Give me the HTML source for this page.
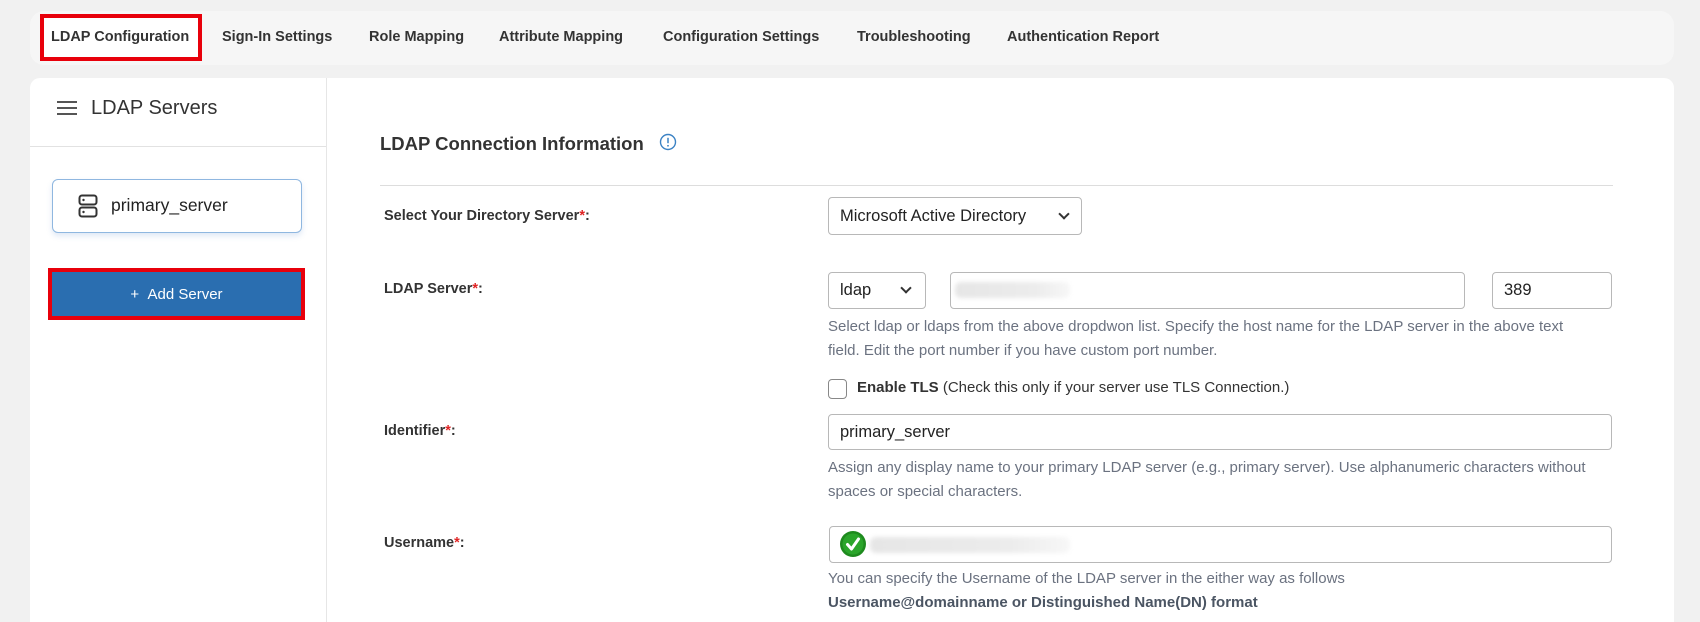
<!DOCTYPE html>
<html><head><meta charset="utf-8"><style>
*{box-sizing:border-box;margin:0;padding:0}
html,body{width:1700px;height:622px;overflow:hidden}
body{background:#f1f1f1;font-family:"Liberation Sans",sans-serif;color:#222;position:relative}
.abs{position:absolute}
.tabbar{left:30px;top:11px;width:1644px;height:54px;background:#f6f6f6;border-radius:14px}
.tab{position:absolute;top:29px;font-size:14.5px;font-weight:bold;color:#333;white-space:nowrap}
.card{left:30px;top:78px;width:1644px;height:544px;background:#fff;border-radius:10px 10px 0 0}
.lbl{position:absolute;left:384px;font-size:14.5px;font-weight:bold;color:#333}
.lbl i{color:#e02424;font-style:normal}
.box{position:absolute;border:1px solid #b8b8b8;border-radius:4px;background:#fff;font-size:16.5px;color:#222;padding-left:11px;display:flex;align-items:center}
.help{position:absolute;left:828px;font-size:15px;color:#6b7280;line-height:24px;white-space:nowrap}
.chev{position:absolute;width:8px;height:8px;border-right:2px solid #333;border-bottom:2px solid #333;transform:rotate(45deg)}
.blur{position:absolute;height:16px;background:linear-gradient(90deg,#e6e6e6,#ececec 70%,#f7f7f7);border-radius:6px;filter:blur(2px)}
</style></head><body>
<div class="abs tabbar"></div>
<div class="abs" style="left:40px;top:14px;width:162px;height:47px;border:4px solid #e8000b;background:#fff"></div>
<div class="tab" style="left:51px">LDAP Configuration</div>
<div class="tab" style="left:222px">Sign-In Settings</div>
<div class="tab" style="left:369px">Role Mapping</div>
<div class="tab" style="left:499px">Attribute Mapping</div>
<div class="tab" style="left:663px">Configuration Settings</div>
<div class="tab" style="left:857px">Troubleshooting</div>
<div class="tab" style="left:1007px">Authentication Report</div>

<div class="abs card"></div>
<div class="abs" style="left:326px;top:78px;width:1px;height:544px;background:#e6e6e6"></div>
<div class="abs" style="left:30px;top:146px;width:296px;height:1px;background:#e2e2e2"></div>
<div class="abs" style="left:57px;top:101px;width:20px;height:2px;background:#555;box-shadow:0 6px 0 #555,0 12px 0 #555"></div>
<div class="abs" style="left:91px;top:97px;font-size:20px;color:#333">LDAP Servers</div>

<div class="abs" style="left:52px;top:179px;width:250px;height:54px;border:1px solid #8fb7e0;border-radius:6px;box-shadow:0 3px 6px rgba(80,130,200,.18);background:#fff"></div>
<svg class="abs" style="left:78px;top:194px" width="20" height="24" viewBox="0 0 20 24"><rect x="1.5" y="1.5" width="17" height="9" rx="2.5" fill="none" stroke="#333" stroke-width="2"/><rect x="1.5" y="13.5" width="17" height="9" rx="2.5" fill="none" stroke="#333" stroke-width="2"/><circle cx="5.5" cy="6" r="1.2" fill="#333"/><circle cx="5.5" cy="18" r="1.2" fill="#333"/></svg>
<div class="abs" style="left:111px;top:195px;font-size:17.5px;color:#222">primary_server</div>

<div class="abs" style="left:48px;top:268px;width:257px;height:52px;border:4px solid #e8000b;background:#2a6eb0;color:#fff;font-size:15px;display:flex;align-items:center;justify-content:center">+&nbsp;&nbsp;Add Server</div>

<div class="abs" style="left:380px;top:133px;font-size:18.5px;font-weight:bold;color:#333">LDAP Connection Information</div>
<svg class="abs" style="left:659px;top:133px" width="18" height="18" viewBox="0 0 18 18"><circle cx="9" cy="9" r="7.5" fill="none" stroke="#3b82c4" stroke-width="1.4"/><line x1="9" y1="4.8" x2="9" y2="10.2" stroke="#3b82c4" stroke-width="1.5"/><circle cx="9" cy="12.8" r="0.9" fill="#3b82c4"/></svg>
<div class="abs" style="left:380px;top:185px;width:1233px;height:1px;background:#ddd"></div>

<div class="lbl" style="top:208px">Select Your Directory Server<i>*</i>:</div>
<div class="box" style="left:828px;top:197px;width:254px;height:38px">Microsoft Active Directory</div>
<div class="chev" style="left:1060px;top:210px"></div>

<div class="lbl" style="top:281px">LDAP Server<i>*</i>:</div>
<div class="box" style="left:828px;top:272px;width:98px;height:37px">ldap</div>
<div class="chev" style="left:902px;top:284px"></div>
<div class="box" style="left:950px;top:272px;width:515px;height:37px"></div>
<div class="blur" style="left:955px;top:282px;width:115px"></div>
<div class="box" style="left:1492px;top:272px;width:120px;height:37px">389</div>
<div class="help" style="top:315px">Select ldap or ldaps from the above dropdwon list. Specify the host name for the LDAP server in the above text<br>field. Edit the port number if you have custom port number.</div>

<div class="abs" style="left:828px;top:379px;width:19px;height:20px;border:1px solid #888;border-radius:4px"></div>
<div class="abs" style="left:857px;top:379px;font-size:15px;color:#333"><b>Enable TLS</b> (Check this only if your server use TLS Connection.)</div>

<div class="lbl" style="top:423px">Identifier<i>*</i>:</div>
<div class="box" style="left:828px;top:414px;width:784px;height:36px">primary_server</div>
<div class="help" style="top:456px">Assign any display name to your primary LDAP server (e.g., primary server). Use alphanumeric characters without<br>spaces or special characters.</div>

<div class="lbl" style="top:535px">Username<i>*</i>:</div>
<div class="box" style="left:829px;top:526px;width:783px;height:37px"></div>
<svg class="abs" style="left:839px;top:530px" width="28" height="28" viewBox="0 0 28 28"><circle cx="14" cy="14" r="13" fill="#1e8a1e"/><circle cx="14" cy="14" r="10.5" fill="#2aa52a"/><path d="M8.5 14.5l4 4.5 7-10" fill="none" stroke="#fff" stroke-width="3" stroke-linecap="round" stroke-linejoin="round"/></svg>
<div class="blur" style="left:870px;top:537px;width:200px"></div>
<div class="help" style="top:567px">You can specify the Username of the LDAP server in the either way as follows<br><b style="color:#4b5563">Username@domainname or Distinguished Name(DN) format</b></div>
</body></html>
